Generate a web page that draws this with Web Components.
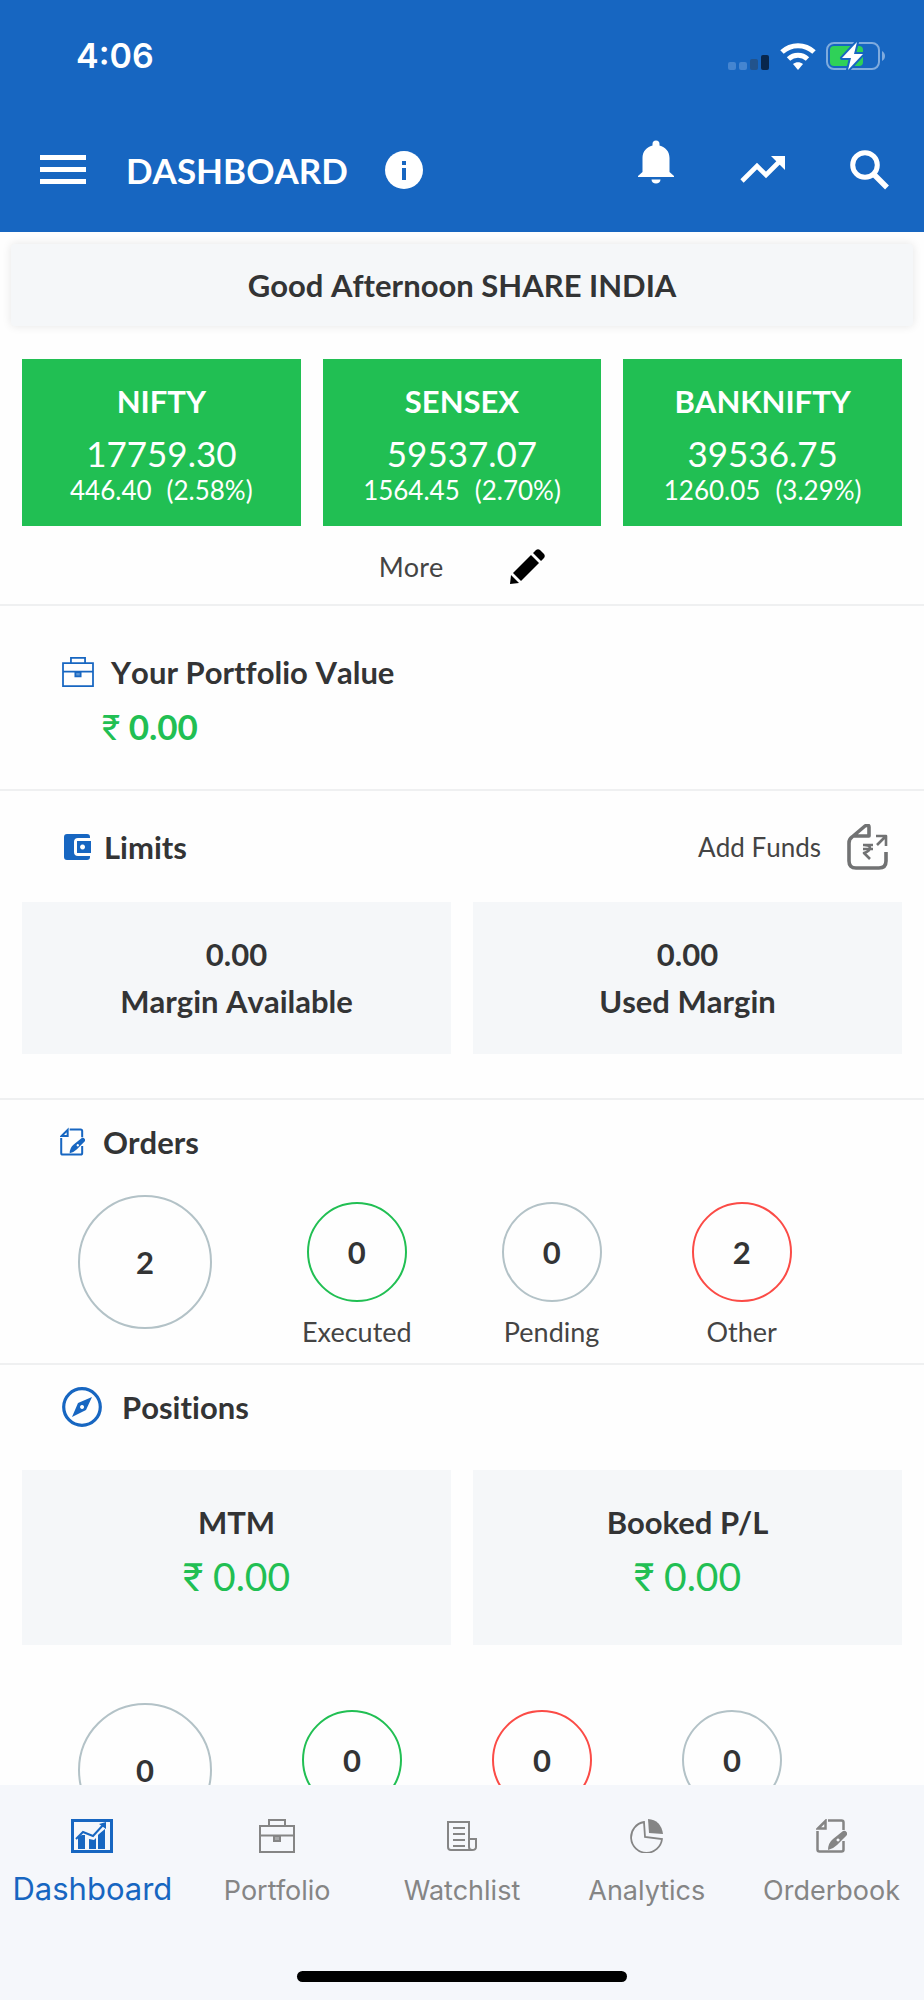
<!DOCTYPE html>
<html lang="en">
<head>
<meta charset="utf-8">
<meta name="viewport" content="width=device-width, initial-scale=1">
<title>Dashboard</title>
<style>
  html, body { margin: 0; height: 100%; }
  body {
    --blue: #1766c1;
    --green: #21bf53;
    --red: #fb4b46;
    --grey-ring: #b3c2c7;
    --panel: #f5f7f9;
    --line: #eff0f1;
    --ink: #333435;
    background: #fefefe;
    color: var(--ink);
    font-family: Lato, "Noto Sans", sans-serif;
    font-size: 31px;
    line-height: 40px;
    font-variant-ligatures: none;
    font-kerning: none;
  }
</style>
</head>
<body>
<trade-app>
  <status-bar slot="top" time="4:06"></status-bar>
  <app-header slot="top" heading="DASHBOARD"></app-header>

  <greeting-card>Good Afternoon SHARE INDIA</greeting-card>
  <index-list>
    <index-card name="NIFTY" value="17759.30" change="446.40" percent="(2.58%)"></index-card>
    <index-card name="SENSEX" value="59537.07" change="1564.45" percent="(2.70%)"></index-card>
    <index-card name="BANKNIFTY" value="39536.75" change="1260.05" percent="(3.29%)"></index-card>
  </index-list>
  <more-row></more-row>
  <portfolio-value amount="0.00">Your Portfolio Value</portfolio-value>
  <limits-section>
    <stat-box><span>0.00</span><span>Margin Available</span></stat-box>
    <stat-box><span>0.00</span><span>Used Margin</span></stat-box>
  </limits-section>
  <orders-section>
    <count-ring size="large" count="2"></count-ring>
    <count-ring tone="green" count="0">Executed</count-ring>
    <count-ring count="0">Pending</count-ring>
    <count-ring tone="red" count="2">Other</count-ring>
  </orders-section>
  <positions-section>
    <stat-box slot="stats" tall><span>MTM</span><money-text>0.00</money-text></stat-box>
    <stat-box slot="stats" tall><span>Booked P/L</span><money-text>0.00</money-text></stat-box>
    <count-ring size="large" count="0"></count-ring>
    <count-ring tone="green" count="0"></count-ring>
    <count-ring tone="red" count="0"></count-ring>
    <count-ring count="0"></count-ring>
  </positions-section>

  <tab-bar slot="bottom">
    <tab-item icon="chart" active>Dashboard</tab-item>
    <tab-item icon="briefcase">Portfolio</tab-item>
    <tab-item icon="list">Watchlist</tab-item>
    <tab-item icon="pie">Analytics</tab-item>
    <tab-item icon="note">Orderbook</tab-item>
  </tab-bar>
</trade-app>

<script>
const ICONS = {
  menu: ['0 0 46 30', '<path fill="currentColor" d="M0 0h46v5H0zM0 12h46v5H0zM0 24h46v5H0z"/>'],
  info: ['0 0 38 38', '<circle cx="19" cy="19" r="19" fill="currentColor"/><path fill="#1766c1" d="M17 10h4v4h-4zM17 17h4v12h-4z"/>'],
  bell: ['0 0 36 44', '<path fill="currentColor" d="M14.500 4a3.500 3.500 0 0 1 7 0v1.500c6 1.500 10 6 10 12.500v14l4.500 4v1H0v-1l4.500-4V18c0-6.500 4-11 10-12.500zM13.500 39.500h9c0 2.500-2 4-4.500 4s-4.500-1.500-4.500-4z"/>'],
  trend: ['0 0 46 28', '<path d="M2 25 17 10 26 19 41 4" fill="none" stroke="currentColor" stroke-width="4.600"/><path fill="currentColor" d="M31 0h14v14z"/>'],
  search: ['0 0 40 40', '<circle cx="15" cy="15" r="12.300" fill="none" stroke="currentColor" stroke-width="5"/><path d="m24.500 25 12.500 12.500" stroke="currentColor" stroke-width="5.500"/>'],
  signal: ['0 0 42 16', '<rect y="7" width="8" height="8" rx="2" fill="#4585d0"/><rect x="11" y="7" width="8" height="8" rx="2" fill="#4585d0"/><rect x="22" y="4" width="8" height="11" rx="2" fill="#22538c"/><rect x="33" y="0" width="8" height="15" rx="2" fill="#08274d"/>'],
  wifi: ['0 0 36 27', '<g fill="none" stroke="currentColor" stroke-width="5"><path d="M2 9C11 .500 25 .500 34 9"/><path d="M8.500 16c5.500-5 13.500-5 19 0"/></g><path fill="currentColor" d="M13 21c3-2.500 7-2.500 10 0l-5 6z"/>'],
  battery: ['0 0 60 30', '<rect x="1" y="2" width="52" height="26" rx="7" fill="none" stroke="#7fabde" stroke-width="2"/><path d="M56 10c4 2 4 8 0 10z" fill="#7fabde"/><rect x="4" y="5" width="33" height="20" rx="4" fill="#2fd158"/><path d="M31 1 16 17h9l-3 12 15-16h-9z" fill="#fff" stroke="#1766c1" stroke-width="4" paint-order="stroke" stroke-linejoin="round"/>'],
  pencil: ['0 0 36 36', '<path fill="currentColor" d="M1 35 2 26l8 8zM4 24 22 6l8 8-18 18zM24 4l3-3q2-1.500 4 0l4 4q1.500 2 0 4l-3 3z"/>'],
  briefcase: ['0 0 36 34', '<g fill="none" stroke="currentColor" stroke-width="2"><path d="M1 7h34v26H1zM10 7V1h16v6M1 16.500h34"/><path d="M15 17h6v5h-6z" fill="currentColor" fill-opacity=".7"/></g>'],
  wallet: ['0 0 28 26', '<path fill="currentColor" d="M3 0h20q3 0 3 3v1H14q-4 0-4 4v10q0 4 4 4h12v1q0 3-3 3H3q-3 0-3-3V3q0-3 3-3z"/><path fill="currentColor" fill-rule="evenodd" d="M13 7h14v12H13zM18.500 10.500a2.500 2.500 0 1 0 .1 0z"/>'],
  funds: ['0 0 42 46', '<g fill="none" stroke="currentColor" stroke-width="3.600" stroke-linejoin="round"><path d="M39 28v9q0 7-7 7H9q-7 0-7-7V19q0-4 3-6L18 2q4-2 4 1v9H7"/><g stroke-width="2.600"><path d="M29 12h10v10M38.500 12.500 30 21"/><path d="M16 21h10M16 25h10M17 21q6 0 6 3t-6 5l6 6"/></g></g>'],
  note: ['0 0 31 34', '<g fill="none" stroke="currentColor" stroke-width="2.500"><path d="M12 1.500h13.500q2 0 2 2V11M27.500 22v8.500q0 2-2 2h-22q-2 0-2-2V12M2 9.500 9.500 2v7.500z"/></g><path fill="currentColor" fill-rule="evenodd" d="M12 31q0-7 5-11l10-8q2-1 3.500 1t0 3.500L21 26q-4 4-9 5zM22 19.500a1.500 1.500 0 1 0 .1 0z"/>'],
  compass: ['0 0 40 40', '<circle cx="20" cy="20" r="18.300" fill="none" stroke="currentColor" stroke-width="3.200"/><path fill="currentColor" fill-rule="evenodd" d="M30 10 24 23 10 30 16 16zM20 18a2 2 0 1 0 .1 0z"/>'],
  chart: ['0 0 42 34', '<path d="M1.500 1.500h39v31h-39z" fill="none" stroke="currentColor" stroke-width="3"/><path fill="currentColor" d="m7 18 4-2h3v14H7zM18 20l5 1 2-2v11h-7zM28 15l6-5v20h-7V16zM28 5l7-2v7z"/><path d="m5 20 7-7 10 4L33 5" fill="none" stroke="currentColor" stroke-width="2"/>'],
  list: ['0 0 30 30', '<g fill="none" stroke="currentColor" stroke-width="2"><path d="M22 18V1H1v25q0 3 3 3h21q-3 0-3-3v-8h7v8q0 3-4 3M6 7h12M6 13h12M6 19h12M6 25h12"/></g>'],
  pie: ['0 0 34 34', '<path d="M14 3 15 18l17 2A15.500 15.500 0 1 1 14 3z" fill="none" stroke="currentColor" stroke-width="1.800"/><path fill="currentColor" d="M18 0q13 1 15 15l-14-1z"/>']
};

function define(name, render) {
  customElements.define(name, class extends HTMLElement {
    constructor() {
      super();
      this.attachShadow({ mode: 'open' });
    }
    connectedCallback() {
      const template = document.createElement('template');
      template.innerHTML = render(this);
      this.shadowRoot.replaceChildren(template.content.cloneNode(true));
    }
  });
}
const attr = (el, name) => el.getAttribute(name) || '';

define('ui-icon', el => {
  const [box, art] = ICONS[attr(el, 'name')];
  const [, , w, h] = box.split(' ');
  return `<style>
    :host { display: block; flex: none; }
    svg { display: block; }
  </style>
  <svg width="${attr(el, 'width') || w}" height="${attr(el, 'height') || h}" viewBox="${box}" aria-hidden="true">${art}</svg>`;
});

define('trade-app', () => `<style>
    :host { display: flex; flex-direction: column; height: 100vh; }
    main { flex: 1; min-height: 0; overflow-y: auto; scrollbar-width: none; }
  </style>
  <slot name="top"></slot><main><slot></slot></main><slot name="bottom"></slot>`);

define('status-bar', el => `<style>
    :host { display: flex; align-items: center; justify-content: space-between; height: 112px; padding: 0 38px 0 76px; background: var(--blue); color: #fff; font: 600 34px/40px Inter, sans-serif; }
    div { display: flex; align-items: center; gap: 10px; }
    ui-icon:first-child { align-self: flex-end; }
  </style>
  <span>${attr(el, 'time')}</span>
  <div><ui-icon name="signal"></ui-icon><ui-icon name="wifi"></ui-icon><ui-icon name="battery"></ui-icon></div>`);

define('app-header', el => `<style>
    :host { display: flex; align-items: center; height: 116px; padding: 0 34px 4px 40px; background: var(--blue); color: #fff; }
    button { display: block; padding: 0; border: 0; background: none; color: inherit; cursor: pointer; }
    h1 { margin: 0 37px 0 40px; font-size: 35px; font-weight: 700; line-height: 40px; }
    nav { display: flex; align-items: center; gap: 64px; margin-left: auto; }
    .bell { margin: 0 2px 16px 0; }
  </style>
  <button aria-label="Menu"><ui-icon name="menu"></ui-icon></button>
  <h1>${attr(el, 'heading')}</h1>
  <button aria-label="Info"><ui-icon name="info"></ui-icon></button>
  <nav>
    <button class="bell" aria-label="Notifications"><ui-icon name="bell"></ui-icon></button>
    <button aria-label="Markets"><ui-icon name="trend"></ui-icon></button>
    <button aria-label="Search"><ui-icon name="search"></ui-icon></button>
  </nav>`);

define('greeting-card', () => `<style>
    :host { display: block; margin: 12px 11px 33px; padding: 21px 0; background: var(--panel); border-radius: 4px; box-shadow: 0 0 10px rgba(0, 0, 0, .1); text-align: center; font-weight: 700; }
  </style><slot></slot>`);

define('index-list', () => `<style>
    :host { display: grid; grid-template-columns: repeat(3, 1fr); gap: 22px; margin: 0 22px; }
  </style><slot></slot>`);

define('index-card', el => `<style>
    :host { display: block; padding: 22px 0 19px; background: var(--green); color: #fff; text-align: center; }
    p { margin: 0; }
    .name { font-weight: 700; margin-bottom: 12px; }
    .value { font-size: 35px; }
    .change { display: flex; justify-content: center; gap: 15px; font-size: 26px; line-height: 34px; }
  </style>
  <p class="name">${attr(el, 'name')}</p>
  <p class="value">${attr(el, 'value')}</p>
  <p class="change"><span>${attr(el, 'change')}</span><span>${attr(el, 'percent')}</span></p>`);

define('more-row', () => `<style>
    :host { display: flex; justify-content: center; align-items: center; gap: 66px; height: 74px; padding-top: 4px; border-bottom: 2px solid var(--line); }
    a { color: #444; font-size: 27px; text-decoration: none; }
    button { padding: 0; border: 0; background: none; color: #000; }
  </style>
  <a href="#more">More</a><button aria-label="Edit"><ui-icon name="pencil"></ui-icon></button>`);

define('section-title', el => `<style>
    :host { display: flex; align-items: center; font-weight: 700; }
    ui-icon { color: var(--blue); }
    h2 { margin: 0; font-size: inherit; font-weight: inherit; }
  </style>
  <ui-icon name="${attr(el, 'icon')}" ${el.hasAttribute('small') ? `width="${attr(el, 'small')}" height="30"` : ''}></ui-icon><h2><slot></slot></h2>`);

define('money-text', () => `<style>
    :host { display: block; color: var(--green); font-size: 39px; font-weight: 400; line-height: 48px; }
    span { font-family: Roboto, sans-serif; font-weight: 400; }
  </style><span>₹</span> <slot></slot>`);

define('portfolio-value', el => `<style>
    :host { display: block; padding: 46px 62px 36px; border-bottom: 2px solid var(--line); }
    section-title { gap: 17px; }
    money-text { margin: 10px 0 0 40px; font-size: 35px; font-weight: 700; }
  </style>
  <section-title icon="briefcase" small="32"><slot></slot></section-title>
  <money-text>${attr(el, 'amount')}</money-text>`);

define('limits-section', () => `<style>
    :host { display: block; padding-bottom: 44px; border-bottom: 2px solid var(--line); }
    header { display: flex; justify-content: space-between; align-items: center; height: 111px; padding: 0 35px 0 64px; }
    section-title { gap: 12px; }
    a { display: flex; align-items: center; gap: 26px; color: #444; font-size: 26px; text-decoration: none; }
    ui-icon { color: #717273; }
    div { display: grid; grid-template-columns: 1fr 1fr; gap: 22px; margin: 0 22px; }
  </style>
  <header><section-title icon="wallet">Limits</section-title>
  <a href="#funds">Add Funds <ui-icon name="funds"></ui-icon></a></header>
  <div><slot></slot></div>`);

define('stat-box', el => {
  const tall = el.hasAttribute('tall');
  return `<style>
    :host { display: flex; flex-direction: column; align-items: center; gap: ${tall ? 10 : 7}px; padding: 32px 0 ${tall ? 43 : 33}px; background: var(--panel); font-weight: 700; font-kerning: ${tall ? 'normal' : 'none'}; }
  </style><slot></slot>`;
});

define('ring-row', () => `<style>
    :host { display: flex; align-items: flex-start; gap: 90px; padding-left: 78px; }
  </style><slot></slot>`);

define('count-ring', el => {
  const large = attr(el, 'size') === 'large';
  const tone = { green: 'var(--green)', red: 'var(--red)' }[attr(el, 'tone')] || 'var(--grey-ring)';
  return `<style>
    :host { display: flex; flex-direction: column; align-items: center; gap: 10px; padding-top: ${large ? 0 : 7}px; color: #444; font-size: 27px; font-kerning: normal; }
    div { display: flex; align-items: center; justify-content: center; box-sizing: border-box; width: ${large ? 134 : 100}px; height: ${large ? 134 : 100}px; border: 2px solid ${tone}; border-radius: 50%; color: var(--ink); font-size: 31px; font-weight: 700; }
  </style>
  <div>${attr(el, 'count')}</div><slot></slot>`;
});

define('orders-section', () => `<style>
    :host { display: block; padding: 22px 0 11px; border-bottom: 2px solid var(--line); }
    section-title { gap: 18px; margin: 0 60px 33px; }
  </style>
  <section-title icon="note" small="25">Orders</section-title>
  <ring-row><slot></slot></ring-row>`);

define('positions-section', () => `<style>
    :host { display: block; padding-top: 22px; }
    section-title { gap: 20px; margin: 0 62px 43px; }
    div { display: grid; grid-template-columns: 1fr 1fr; gap: 22px; margin: 0 22px 58px; }
  </style>
  <section-title icon="compass">Positions</section-title>
  <div><slot name="stats"></slot></div>
  <ring-row><slot></slot></ring-row>`);

define('tab-bar', () => `<style>
    :host { display: block; background: #f5f7fb; padding-bottom: 18px; }
    nav { display: grid; grid-template-columns: repeat(5, 1fr); height: 186px; }
    .home { width: 330px; height: 11px; margin: 0 auto; border-radius: 6px; background: #000; }
  </style>
  <nav><slot></slot></nav><div class="home"></div>`);

define('tab-item', el => {
  const active = el.hasAttribute('active');
  return `<style>
    :host { display: block; min-width: 0; }
    a { display: flex; flex-direction: column; align-items: center; padding-top: 34px; color: ${active ? 'var(--blue)' : '#858585'}; font: 400 ${active ? 31 : 27}px/40px Inter, sans-serif; text-decoration: none; white-space: nowrap; }
    span { display: flex; align-items: center; height: 34px; margin-bottom: ${active ? 16 : 18}px; }
  </style>
  <a href="#"${active ? ' aria-current="page"' : ''}><span><ui-icon name="${attr(el, 'icon')}"></ui-icon></span><slot></slot></a>`;
});
</script>
</body>
</html>
